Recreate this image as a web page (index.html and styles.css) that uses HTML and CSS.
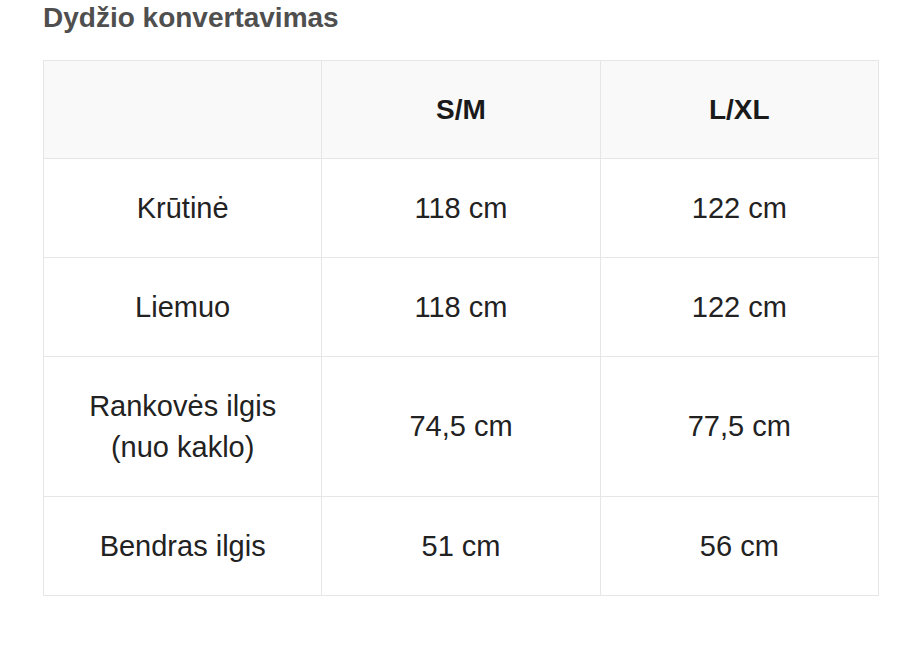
FILE: index.html
```html
<!DOCTYPE html>
<html lang="lt">
<head>
<meta charset="utf-8">
<link rel="stylesheet" href="styles.css">
</head>
<body>
<div class="page">
  <h2 class="title">Dydžio konvertavimas</h2>
  <table class="size-table">
    <thead>
      <tr><th></th><th>S/M</th><th>L/XL</th></tr>
    </thead>
    <tbody>
      <tr><td>Krūtinė</td><td>118 cm</td><td>122 cm</td></tr>
      <tr><td>Liemuo</td><td>118 cm</td><td>122 cm</td></tr>
      <tr><td>Rankovės ilgis<br>(nuo kaklo)</td><td>74,5 cm</td><td>77,5 cm</td></tr>
      <tr><td>Bendras ilgis</td><td>51 cm</td><td>56 cm</td></tr>
    </tbody>
  </table>
</div>
</body>
</html>
```
FILE: styles.css
```css
html, body {
  margin: 0;
  padding: 0;
  background: #ffffff;
}
.page {
  padding: 1px 0 0 43px;
  font-family: "Liberation Sans", Arial, sans-serif;
}
.title {
  margin: 0 0 25px 0;
  font-size: 28px;
  line-height: 34px;
  font-weight: 700;
  color: #4f4f4f;
}
.size-table {
  width: 836px;
  border-collapse: collapse;
  table-layout: fixed;
  color: #222222;
}
.size-table th,
.size-table td {
  border: 1px solid #e6e6e6;
  text-align: center;
  vertical-align: middle;
  font-size: 29px;
  line-height: 41px;
  padding: 28.5px 10px;
}
.size-table th {
  background: #f9f9f9;
  font-weight: 700;
  font-size: 28px;
  padding: 28px 10px;
  color: #1a1a1a;
}
```
